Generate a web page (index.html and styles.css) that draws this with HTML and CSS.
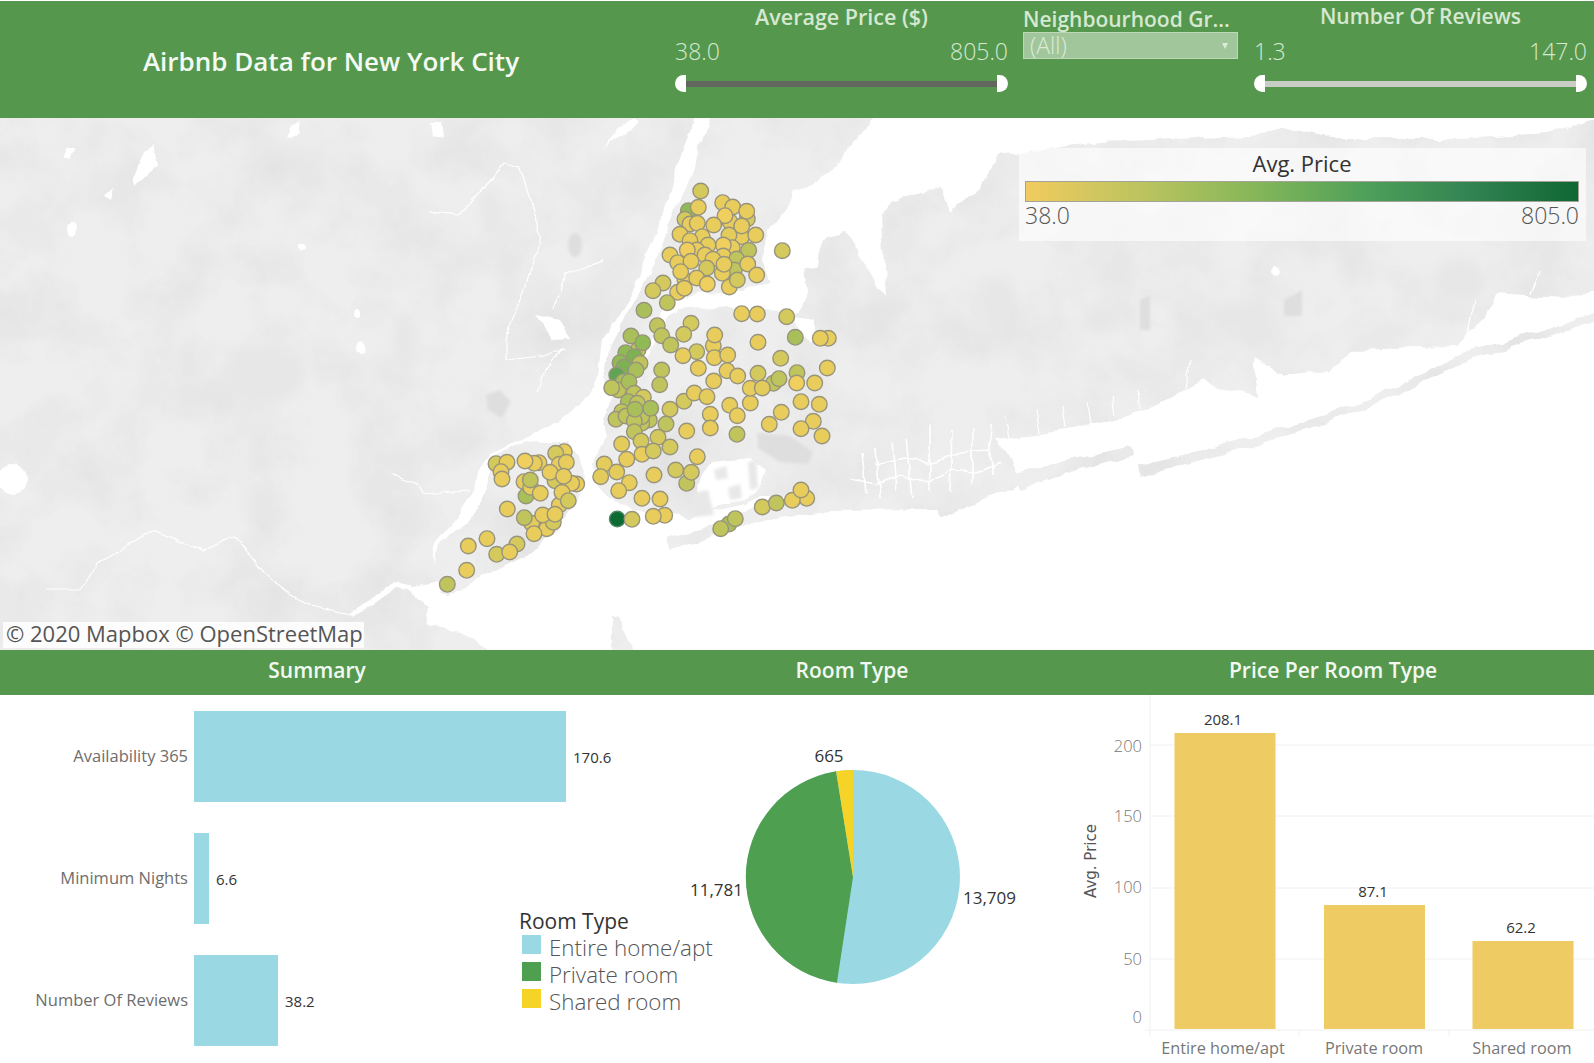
FILE: index.html
```html
<!DOCTYPE html>
<html lang="en">
<head>
    <meta charset="UTF-8"/>
    <title>Airbnb Data for New York City</title>
    <link rel="stylesheet" href="styles.css">
</head>
<body>
    <header class="topbar">
        <h1 class="title">Airbnb Data for New York City</h1>
        <div class="filter">
            <div class="filter-name">Average Price ($)</div>
            <div class="range-vals"><span>38.0</span><span>805.0</span></div>
            <div class="slider"><i class="knob knob-l"></i><i class="track"></i><i class="knob knob-r"></i></div>
        </div>
        <div class="filter filter-drop">
            <div class="filter-name">Neighbourhood Gr...</div>
            <div class="dropdown"><span>(All)</span><i class="caret"></i></div>
        </div>
        <div class="filter filter-reviews">
            <div class="filter-name filter-name-long">Number Of Reviews</div>
            <div class="range-vals"><span>1.3</span><span>147.0</span></div>
            <div class="slider"><i class="knob knob-l"></i><i class="track track-light"></i><i class="knob knob-r"></i></div>
        </div>
    </header>

    <section class="map">
        <svg class="map-svg" width="1594" height="532" viewBox="0 118 1594 532">
            <defs>
                <filter id="landfx" filterUnits="userSpaceOnUse" x="-40" y="80" width="1680" height="610" color-interpolation-filters="sRGB">
                    <feTurbulence type="fractalNoise" baseFrequency="0.035" numOctaves="4" seed="3" result="edge"/>
                    <feDisplacementMap in="SourceGraphic" in2="edge" scale="11" xChannelSelector="R" yChannelSelector="G" result="shape"/>
                    <feTurbulence type="fractalNoise" baseFrequency="0.014" numOctaves="5" seed="8" result="cloud"/>
                    <feColorMatrix in="cloud" type="matrix" values="0 0 0 0 0.78  0 0 0 0 0.78  0 0 0 0 0.78  0.55 0 0 0 -0.22" result="shade"/>
                    <feComposite in="shade" in2="shape" operator="in" result="shaded"/>
                    <feMerge><feMergeNode in="shape"/><feMergeNode in="shaded"/></feMerge>
                </filter>
                <filter id="rough" filterUnits="userSpaceOnUse" x="-40" y="80" width="1680" height="610" color-interpolation-filters="sRGB">
                    <feTurbulence type="fractalNoise" baseFrequency="0.05" numOctaves="3" seed="5"/>
                    <feDisplacementMap in="SourceGraphic" scale="7" xChannelSelector="R" yChannelSelector="G"/>
                    <feGaussianBlur stdDeviation="0.35"/>
                </filter>
                <filter id="soft"><feGaussianBlur stdDeviation="6"/></filter>
                <filter id="soft2"><feGaussianBlur stdDeviation="1.5"/></filter>
            </defs>
            <!-- land -->
            <g class="land" filter="url(#landfx)">
                <polygon points="-30,90 704,90 694,118 676,170 663,218 628,298 602,339 597,387 571,411 531,436 490,455 474,470 469,498 449,529 434,543 439,580 408,586 429,608 423,680 -30,680"/>
                <polygon points="716,90 885,90 876,118 872,125 860,135 845,150 832,170 815,183 806,187 793,193 790,207 770,227 767,233 763,260 770,283 747,287 720,293 697,295 677,302 660,313 653,333 650,350 640,365 625,385 611,390 603,375 610,350 623,317 657,257 693,170 709,118"/>
                <polygon points="613,395 628,392 645,372 658,338 665,318 680,310 700,308 730,306 745,313 767,310 800,312 808,290 805,268 814,267 825,236 845,232 862,262 881,290 886,298 881,218 896,201 942,187 950,215 975,190 998,156 1069,146 1100,142 1248,136 1279,125 1300,133 1335,139 1457,139 1549,134 1594,120 1630,100 1630,282 1594,290 1564,298 1493,294 1484,320 1457,346 1350,349 1330,370 1284,377 1253,356 1258,398 1202,380 1151,408 1100,422 1049,432 998,439 1022,484 939,518 936,510 825,511 800,497 760,497 745,503 715,510 690,517 647,512 610,500 597,487 593,463 607,437 603,415"/>
                <polygon points="440,593 435,573 440,543 473,517 487,490 493,457 527,440 570,442 585,473 577,497 557,530 527,553 480,577 447,595"/>
                <polygon points="668,540 720,522 760,505 815,500 830,512 760,520 668,552"/>
                <polygon points="1015,474 1130,446 1132,456 1022,488"/>
                <polygon points="1136,466 1253,438 1370,400 1457,356 1630,300 1630,308 1457,365 1370,408 1253,447 1138,476"/>
                <polygon points="612,615 620,615 640,680 612,680"/>
                <polygon points="423,625 470,635 520,680 423,680"/>
            </g>
            <!-- darker ground -->
            <g class="patches" filter="url(#soft)">
                <ellipse cx="265" cy="375" rx="40" ry="30"/>
                <ellipse cx="405" cy="340" rx="12" ry="28"/>
                <ellipse cx="490" cy="210" rx="10" ry="24"/>
                <ellipse cx="1000" cy="300" rx="16" ry="24"/>
                <ellipse cx="1100" cy="320" rx="18" ry="14"/>
                <ellipse cx="1255" cy="325" rx="18" ry="28"/>
                <ellipse cx="1460" cy="280" rx="26" ry="22"/>
            </g>
            <g class="patches-hard" filter="url(#soft2)">
                <polygon points="757,433 790,436 813,452 808,464 780,462 758,448"/>
                <polygon points="486,395 500,390 511,402 502,418 488,410"/>
                <polygon points="1284,300 1302,290 1302,316 1284,316"/>
                <polygon points="1140,300 1150,295 1150,330 1140,330"/>
                <ellipse cx="575" cy="245" rx="7" ry="12"/>
            </g>
            <!-- water over land -->
            <g class="water" filter="url(#rough)">
                <polygon points="697,485 712,462 750,458 765,470 758,490 745,500 715,506 702,512"/>
                <polygon points="793,317 813,320 812,343 800,335"/>
                <polygon points="536,315 560,320 572,339 550,340"/>
                <polygon points="551,425 576,422 576,436 556,436"/>
                <ellipse cx="12" cy="479" rx="15" ry="15"/>
                <polygon points="66,146 74,146 71,158 65,158"/>
                <polygon points="136,165 152,145 157,165 146,175 134,188 132,178"/>
                <polygon points="104,195 114,188 111,199"/>
                <polygon points="432,122 441,122 443,138 434,136"/>
                <ellipse cx="71" cy="229" rx="5" ry="7"/>
                <ellipse cx="302" cy="246" rx="4" ry="3"/>
                <ellipse cx="358" cy="313" rx="3" ry="5"/>
                <ellipse cx="360" cy="347" rx="5" ry="6"/>
                <ellipse cx="1276" cy="272" rx="4" ry="5"/>
                <polygon points="293,125 300,120 298,134 288,138"/>
                <polygon points="620,125 634,118 638,122 612,142 606,148"/>
            </g>
            <g class="isles" filter="url(#soft2)">
                <polygon points="692,493 708,490 714,515 695,517"/>
                <polygon points="714,470 726,466 728,478 716,480"/>
                <polygon points="728,488 740,484 742,498 730,500"/>
                <polygon points="748,462 756,460 758,488 750,490"/>
            </g>
            <g class="rivers" filter="url(#rough)">
                <polyline points="429,212 459,215 480,191 505,163 520,167 541,236 526,284 505,339 505,360 541,356 566,349 561,349 541,380 536,391"/>
                <polyline points="602,260 566,274 552,310"/>
                <polyline points="46,589 82,589 97,563 153,530 204,551 235,536 276,584 306,605 352,615 398,587"/>
                <polyline points="388,474 418,484 423,494 469,491"/>
                <polyline class="wide" points="352,615 375,600 395,585 412,588"/>
                <polyline class="marsh" points="866,494 862,452"/>
                <polyline class="marsh" points="880,498 876,448"/>
                <polyline class="marsh" points="896,490 892,442"/>
                <polyline class="marsh" points="912,498 906,438"/>
                <polyline class="marsh" points="930,490 930,425"/>
                <polyline class="marsh" points="850,478 875,484 900,476 930,482 950,470 975,472 1000,462"/>
                <polyline class="marsh" points="875,465 905,458 935,462 960,452 990,450"/>
                <polyline class="marsh" points="950,494 952,430"/>
                <polyline class="marsh" points="972,484 972,428"/>
                <polyline class="marsh" points="992,474 990,425"/>
                <polyline points="1010,438 1006,416"/>
                <polyline points="1040,434 1036,408"/>
                <polyline points="1065,428 1062,404"/>
                <polyline points="1090,424 1086,402"/>
                <polyline points="1115,416 1112,395"/>
                <polyline points="1140,410 1138,390"/>
                <polyline points="1185,388 1190,360"/>
                <polyline points="1466,340 1475,300"/>
                <polyline points="1530,295 1540,270"/>
            </g>
            <!-- price marks -->
            <g class="marks">
                <circle class="o1" cx="700.7" cy="191"/><circle class="g2" cx="688.3" cy="210.7"/><circle class="o1" cx="685" cy="219.3"/><circle cx="698.3" cy="207.3"/><circle cx="722.7" cy="202.7"/><circle cx="732.7" cy="207"/><circle class="o1" cx="747.3" cy="219"/><circle cx="746.7" cy="211.3"/><circle cx="730" cy="221.7"/><circle class="y0" cx="725" cy="215.7"/><circle cx="690" cy="224"/><circle cx="697.3" cy="223.3"/><circle cx="713.7" cy="225"/><circle cx="741.7" cy="236.7"/><circle cx="741.7" cy="226"/><circle cx="680" cy="234.3"/><circle cx="755.7" cy="235"/><circle class="y1" cx="729" cy="235"/><circle cx="702.3" cy="236.7"/><circle cx="690" cy="240.7"/><circle cx="732.3" cy="247.7"/><circle class="y0" cx="723.3" cy="245"/><circle cx="708" cy="245"/><circle cx="696.7" cy="250"/><circle class="y0" cx="687.3" cy="250"/><circle class="o2" cx="748.7" cy="250.3"/><circle class="o1" cx="782.3" cy="250.7"/><circle cx="670" cy="255"/><circle cx="705" cy="255"/><circle cx="723.3" cy="256"/><circle class="o2" cx="736.7" cy="259"/><circle cx="713" cy="259.3"/><circle cx="677.7" cy="262.7"/><circle cx="691" cy="261.3"/><circle class="o2" cx="734.3" cy="270"/><circle cx="722.3" cy="273.3"/><circle cx="724" cy="264.3"/><circle cx="747.7" cy="264"/><circle class="o1" cx="706.7" cy="268"/><circle cx="685" cy="280"/><circle cx="680.7" cy="271.7"/><circle cx="756.7" cy="275"/><circle cx="696.7" cy="278"/><circle cx="729.3" cy="287"/><circle class="o1" cx="737.3" cy="280"/><circle class="o1" cx="663" cy="283"/><circle class="y0" cx="707.3" cy="284"/><circle class="o1" cx="653" cy="290.7"/><circle cx="677.7" cy="292.3"/><circle cx="684.3" cy="288.3"/><circle class="o2" cx="667.3" cy="302.7"/><circle class="g1" cx="644" cy="310.3"/><circle cx="741.7" cy="313.7"/><circle cx="757.3" cy="314"/><circle class="o1" cx="786.7" cy="316.7"/><circle class="o2" cx="657.3" cy="325.7"/><circle class="o1" cx="691" cy="323.3"/><circle class="o2" cx="661.7" cy="335.7"/><circle class="o1" cx="683.7" cy="334.3"/><circle cx="713.3" cy="345.7"/><circle cx="714.7" cy="335"/><circle class="g1" cx="795.3" cy="337.3"/><circle cx="828.3" cy="338.3"/><circle cx="820.3" cy="338.3"/><circle class="o2" cx="670.7" cy="345"/><circle cx="758" cy="342.3"/><circle class="o1" cx="696.7" cy="351.7"/><circle cx="683" cy="355.7"/><circle cx="714.3" cy="357.7"/><circle cx="727.7" cy="355"/><circle class="o1" cx="780.7" cy="358.3"/>
                <circle class="o2" cx="638" cy="350"/><circle class="g1" cx="631" cy="336"/><circle class="g2" cx="642.7" cy="342.7"/><circle class="g2" cx="625.7" cy="352.7"/><circle class="g3" cx="634.3" cy="356.7"/><circle class="g2" cx="620" cy="362.7"/><circle class="o2" cx="640" cy="363.3"/><circle class="g3" cx="624" cy="367.3"/><circle class="g1" cx="636" cy="370"/><circle class="g4" cx="616.7" cy="375"/><circle class="g1" cx="623.3" cy="381.7"/><circle class="o2" cx="618.3" cy="390"/><circle class="g1" cx="629" cy="381.7"/><circle class="o2" cx="611.7" cy="387.7"/>
                <circle class="o2" cx="634.3" cy="393.3"/><circle class="o1" cx="643.3" cy="397.3"/><circle class="g1" cx="628.3" cy="401.7"/><circle class="o2" cx="637.3" cy="403.3"/><circle class="o2" cx="621.7" cy="411.7"/><circle class="o2" cx="616" cy="419.3"/><circle class="o2" cx="649.3" cy="420"/><circle class="o2" cx="626" cy="416"/><circle class="o2" cx="641.7" cy="423.3"/><circle class="o2" cx="641.7" cy="416.7"/><circle class="o2" cx="634.3" cy="421"/><circle class="g1" cx="650.7" cy="408.3"/><circle class="g1" cx="635" cy="409.3"/><circle class="o2" cx="634.3" cy="431.7"/><circle class="o1" cx="641" cy="441"/>
                <circle class="o2" cx="661.7" cy="370"/><circle class="o2" cx="659.7" cy="384.7"/><circle class="o1" cx="670" cy="409.3"/><circle class="o1" cx="684" cy="401.3"/><circle cx="694.3" cy="393"/><circle class="y1" cx="707" cy="396.7"/><circle class="o2" cx="666" cy="424"/><circle class="o1" cx="658" cy="437.3"/><circle class="o1" cx="670" cy="447"/><circle cx="642" cy="454.3"/><circle class="o1" cx="653.3" cy="451"/><circle class="y1" cx="621.7" cy="444"/><circle cx="626.7" cy="459.3"/><circle class="y1" cx="604.3" cy="464"/><circle class="y1" cx="616.7" cy="472"/><circle class="y1" cx="600.7" cy="476.7"/><circle cx="629.3" cy="482.7"/><circle cx="618.7" cy="490.7"/><circle cx="642" cy="498.3"/><circle cx="660" cy="499"/><circle cx="654" cy="475"/><circle class="o1" cx="675.7" cy="470"/><circle class="o2" cx="686.7" cy="483.3"/><circle class="o1" cx="691.3" cy="472.3"/><circle cx="697.3" cy="456.7"/><circle cx="686.7" cy="431"/><circle cx="710.3" cy="414.3"/><circle cx="710.3" cy="428"/><circle cx="729.7" cy="405.3"/><circle cx="737.3" cy="415.7"/><circle class="o2" cx="737" cy="434.3"/><circle cx="750.3" cy="403"/><circle cx="698.3" cy="368.3"/><circle cx="713.7" cy="381"/><circle cx="727" cy="370.7"/><circle cx="737.7" cy="376"/><circle class="o1" cx="758" cy="373.3"/><circle cx="750.3" cy="388.3"/><circle class="o2" cx="773.3" cy="383.3"/><circle class="y1" cx="762.3" cy="388"/><circle class="o2" cx="779" cy="378.7"/><circle class="o2" cx="797" cy="372.7"/><circle class="y0" cx="796.7" cy="383"/><circle cx="814.7" cy="383"/><circle cx="827.3" cy="368"/><circle cx="801" cy="401.7"/><circle cx="819.3" cy="404.3"/><circle cx="781.3" cy="412.3"/><circle cx="769.3" cy="424.3"/><circle cx="813.3" cy="421.3"/><circle cx="801" cy="428.7"/><circle cx="822" cy="436"/>
                <circle class="dark" cx="617.3" cy="519"/><circle class="o1" cx="632" cy="519.3"/><circle cx="664.7" cy="515.3"/><circle cx="653.3" cy="516.3"/><circle class="g1" cx="729" cy="524"/><circle class="o2" cx="720.7" cy="528.7"/><circle class="o2" cx="735.3" cy="518.7"/><circle class="o1" cx="762.3" cy="507"/><circle class="o2" cx="776.3" cy="503"/><circle cx="806.7" cy="498.3"/><circle cx="792.3" cy="500.3"/><circle cx="801" cy="490"/>
                <circle class="o1" cx="496" cy="463.7"/><circle cx="507" cy="462.3"/><circle cx="501" cy="471.7"/><circle cx="502" cy="479"/><circle cx="539" cy="462.7"/><circle cx="534.3" cy="463.3"/><circle class="y0" cx="525" cy="461"/><circle cx="564.3" cy="451.7"/><circle class="o1" cx="555.7" cy="453.3"/><circle cx="559.3" cy="464.3"/><circle cx="566.3" cy="462.3"/><circle class="o1" cx="555" cy="480.7"/><circle cx="550" cy="472.3"/><circle cx="576.7" cy="484"/><circle cx="571.7" cy="483.3"/><circle cx="563.7" cy="476.3"/><circle cx="524" cy="481.7"/><circle class="g1" cx="526" cy="496"/><circle cx="530.7" cy="487.3"/><circle class="o2" cx="530.3" cy="480"/><circle cx="540.3" cy="493.3"/><circle cx="559.3" cy="505"/><circle cx="562" cy="492.3"/><circle class="o1" cx="568.3" cy="500.7"/><circle cx="507.3" cy="509"/><circle cx="546.7" cy="528.7"/><circle class="o1" cx="553.3" cy="522.3"/><circle class="y1" cx="531.7" cy="523.3"/><circle class="o2" cx="524.3" cy="517.7"/><circle cx="534" cy="533.7"/><circle cx="542.7" cy="515"/><circle cx="555" cy="514.3"/><circle cx="487" cy="538.7"/><circle cx="468.3" cy="546"/><circle class="o1" cx="517" cy="544"/><circle class="o1" cx="496.7" cy="554.3"/><circle cx="509.7" cy="552"/><circle cx="466.7" cy="570.3"/><circle class="o2" cx="447.3" cy="584.3"/>
            </g>
        </svg>

        <div class="price-legend">
            <div class="legend-name">Avg. Price</div>
            <div class="legend-ramp"></div>
            <div class="legend-vals"><span>38.0</span><span>805.0</span></div>
        </div>
        <div class="credit">© 2020 Mapbox © OpenStreetMap</div>
    </section>

    <div class="subbar">
        <h2 class="sub-summary">Summary</h2>
        <h2 class="sub-room">Room Type</h2>
        <h2 class="sub-price">Price Per Room Type</h2>
    </div>

    <main class="panels">
        <section class="summary">
            <div class="row"><span class="row-label">Availability 365</span><i class="row-bar" style="width:372px"></i><span class="row-val">170.6</span></div>
            <div class="row"><span class="row-label">Minimum Nights</span><i class="row-bar" style="width:15px"></i><span class="row-val">6.6</span></div>
            <div class="row"><span class="row-label">Number Of Reviews</span><i class="row-bar" style="width:84px"></i><span class="row-val">38.2</span></div>
            <div class="room-legend">
                <div class="room-legend-name">Room Type</div>
                <div class="room-item"><i class="swatch sw-blue"></i>Entire home/apt</div>
                <div class="room-item"><i class="swatch sw-green"></i>Private room</div>
                <div class="room-item"><i class="swatch sw-yellow"></i>Shared room</div>
            </div>
        </section>

        <section class="pie">
            <svg width="400" height="368" viewBox="640 695 400 368">
                <circle cx="853" cy="877" r="107" fill="#9AD9E4"/>
                <path d="M853 877 L836.9 982.8 A107 107 0 0 1 836.1 771.3 Z" fill="#4F9F50"/>
                <path d="M853 877 L836.1 771.3 A107 107 0 0 1 853 770 Z" fill="#F5D327"/>
                <text class="val val-big" x="829" y="762" text-anchor="middle">665</text>
                <text class="val val-big" x="743" y="896" text-anchor="end">11,781</text>
                <text class="val val-big" x="963" y="904">13,709</text>
            </svg>
        </section>

        <section class="prices">
            <svg width="554" height="368" viewBox="1040 695 554 368">
                <g class="grid">
                    <line x1="1150" y1="745" x2="1594" y2="745"/>
                    <line x1="1150" y1="816" x2="1594" y2="816"/>
                    <line x1="1150" y1="888" x2="1594" y2="888"/>
                    <line x1="1150" y1="959" x2="1594" y2="959"/>
                    <line x1="1145" y1="1030" x2="1594" y2="1030"/>
                    <line x1="1150" y1="695" x2="1150" y2="1036"/>
                    <line x1="1299" y1="1030" x2="1299" y2="1036"/>
                    <line x1="1449" y1="1030" x2="1449" y2="1036"/>
                </g>
                <rect class="col" x="1174.5" y="733" width="101" height="296"/>
                <rect class="col" x="1324" y="905" width="101" height="124"/>
                <rect class="col" x="1472.5" y="941" width="101" height="88"/>
                <text class="val" x="1223" y="725" text-anchor="middle">208.1</text>
                <text class="val" x="1373" y="897" text-anchor="middle">87.1</text>
                <text class="val" x="1521" y="933" text-anchor="middle">62.2</text>
                <g class="tick">
                    <text x="1142" y="752">200</text>
                    <text x="1142" y="822">150</text>
                    <text x="1142" y="893">100</text>
                    <text x="1142" y="965">50</text>
                    <text x="1142" y="1023">0</text>
                </g>
                <text class="axis-title" transform="translate(1096 861) rotate(-90)" text-anchor="middle">Avg. Price</text>
                <g class="cat">
                    <text x="1223" y="1054">Entire home/apt</text>
                    <text x="1374" y="1054">Private room</text>
                    <text x="1522" y="1054">Shared room</text>
                </g>
            </svg>
        </section>
    </main>
</body>
</html>
```

FILE: styles.css
```css
body {
    margin: 0;
    width: 1594px;
    height: 1063px;
    overflow: hidden;
    background: #fff;
    font-family: "Open Sans", "Liberation Sans", sans-serif;
    color: #333;
}

i {
    display: block;
}

/* top bar with filters */
.topbar {
    display: flex;
    height: 117px;
    margin-top: 1px;
    background: #55984D;
    color: #fff;
}

.title {
    width: 662px;
    margin: 0 13px 0 0;
    padding-top: 43px;
    text-align: center;
    font-size: 26px;
    line-height: 34px;
    font-weight: 600;
    color: #f4faf3;
}

.filter {
    width: 333px;
    color: #d9ebd6;
}

.filter-drop {
    width: 215px;
    margin: 0 16px 0 15px;
}

.filter-name {
    height: 29px;
    margin-top: 1px;
    margin-bottom: -7px;
    text-align: center;
    font-size: 21.5px;
    line-height: 29px;
    font-weight: 600;
    color: #d6e8d2;
}

.filter-name-long {
    font-size: 21px;
}

.filter-drop .filter-name {
    height: 26px;
    margin: 5px 0 0;
    line-height: 26px;
    text-align: left;
    white-space: nowrap;
    font-size: 21px;
}

.range-vals {
    display: flex;
    justify-content: space-between;
    height: 36px;
    padding-top: 12px;
    box-sizing: border-box;
    margin-top: 3px;
    font-size: 23px;
    line-height: 24px;
    font-weight: 300;
    color: #d6e8d2;
    margin-bottom: 12px;
}

.slider {
    display: flex;
    align-items: center;
    height: 17px;
}

.track {
    flex: 1;
    height: 6px;
    background: #63665f;
}

.track-light {
    background: #c9cdc6;
}

.knob {
    width: 11px;
    height: 17px;
    background: #fff;
}

.knob-l {
    border-radius: 9px 0 0 9px;
}

.knob-r {
    border-radius: 0 9px 9px 0;
}

.dropdown {
    display: flex;
    align-items: center;
    justify-content: space-between;
    height: 27px;
    padding: 0 9px 0 6px;
    border: 1px solid #bcd8b7;
    box-sizing: border-box;
    background: #A1C69B;
    font-size: 23px;
    line-height: 22px;
    font-weight: 300;
    color: #dcebd9;
}

.dropdown span {
    margin-top: -2px;
}

.caret {
    width: 0;
    height: 0;
    border: 3.5px solid transparent;
    border-top: 6px solid #dcebd9;
    border-bottom: 0;
}

/* map */
.map {
    position: relative;
    height: 532px;
}

.map-svg {
    display: block;
}

.land polygon {
    fill: #eeeeee;
}

.patches ellipse {
    fill: #e7e7e7;
}

.patches-hard polygon,
.patches-hard ellipse {
    fill: #dedede;
}

.water polygon,
.water ellipse {
    fill: #fff;
}

.isles polygon {
    fill: #e8e8e8;
}

.rivers polyline {
    fill: none;
    stroke: #fff;
    stroke-width: 1.2;
}

.rivers .wide {
    stroke-width: 5;
}

.rivers .marsh {
    stroke-width: 1.6;
}

.marks circle {
    r: 7.8px;
    fill: #E9CD5C;
    stroke: #98947C;
    stroke-width: 1.4;
}

.marks .y0 { fill: #F0CF5E; }
.marks .y1 { fill: #E3CB5C; }
.marks .o1 { fill: #D4C95C; }
.marks .o2 { fill: #BFC55C; }
.marks .g1 { fill: #A9C05A; }
.marks .g2 { fill: #8FBA54; }
.marks .g3 { fill: #7CB350; }
.marks .g4 { fill: #5FA452; }
.marks .dark { fill: #0C6A33; stroke: #4f8a66; }

.price-legend {
    position: absolute;
    left: 1019px;
    top: 30px;
    width: 567px;
    height: 93px;
    padding: 1px 7px 0 6px;
    box-sizing: border-box;
    background: rgba(255, 255, 255, 0.62);
}

.legend-name {
    height: 32px;
    text-align: center;
    font-size: 22px;
    line-height: 29px;
    color: #333;
}

.legend-ramp {
    height: 21px;
    box-sizing: border-box;
    border: 1px solid #a3a39a;
    background: linear-gradient(to right, #F1CB5F 0%, #B9C35E 22%, #84B659 42%, #4D9F59 62%, #338453 80%, #0F6733 100%);
}

.legend-vals {
    display: flex;
    justify-content: space-between;
    font-size: 23px;
    line-height: 26px;
    font-weight: 300;
    color: #555;
}

.credit {
    position: absolute;
    left: 3px;
    top: 504px;
    width: 361px;
    height: 26px;
    padding-left: 3px;
    box-sizing: border-box;
    background: rgba(255, 255, 255, 0.85);
    font-size: 22px;
    line-height: 23px;
    white-space: nowrap;
    color: #555;
}

/* section headings */
.subbar {
    position: relative;
    height: 45px;
    background: #55984D;
}

.subbar h2 {
    position: absolute;
    top: 0;
    margin: 0;
    transform: translateX(-50%);
    font-size: 21px;
    line-height: 41px;
    font-weight: 600;
    white-space: nowrap;
    color: #f2f8f1;
}

.sub-summary { left: 317px; }
.sub-room { left: 852px; }
.sub-price { left: 1333px; }

/* bottom panels */
.panels {
    display: flex;
    height: 368px;
}

.summary {
    position: relative;
    width: 640px;
    padding-top: 16px;
    box-sizing: border-box;
}

.row {
    display: flex;
    align-items: center;
    height: 91px;
    margin-bottom: 31px;
}

.row-label {
    width: 188px;
    margin-right: 6px;
    margin-top: -3px;
    text-align: right;
    font-size: 16.5px;
    color: #6e6e6e;
}

.row-bar {
    height: 91px;
    background: #9AD9E4;
}

.row-val {
    margin-left: 7px;
    font-size: 15px;
    color: #333;
}

.room-legend {
    position: absolute;
    left: 519px;
    top: 214px;
}

.room-legend-name {
    height: 25px;
    font-size: 21px;
    line-height: 25px;
    color: #333;
}

.room-item {
    display: flex;
    align-items: center;
    height: 27px;
    font-size: 22.4px;
    line-height: 27px;
    font-weight: 300;
    white-space: nowrap;
    color: #555;
}

.swatch {
    width: 19px;
    height: 19px;
    margin: -7px 8px 0 3px;
}

.sw-blue { background: #9AD9E4; }
.sw-green { background: #4F9F50; }
.sw-yellow { background: #F5D327; }

.pie,
.prices {
    height: 368px;
}

.pie svg,
.prices svg {
    display: block;
}

.val {
    font-size: 15px;
    fill: #333;
}

.val-big {
    font-size: 17px;
}

.grid line {
    stroke: #f0f0f0;
    stroke-width: 1;
}

.col {
    fill: #EFCC63;
}

.tick text {
    font-size: 16.5px;
    font-weight: 300;
    text-anchor: end;
    fill: #777;
}

.axis-title {
    font-family: "DejaVu Sans", sans-serif;
    font-size: 15px;
    fill: #555;
}

.cat text {
    font-size: 16.3px;
    text-anchor: middle;
    fill: #777;
}
```
